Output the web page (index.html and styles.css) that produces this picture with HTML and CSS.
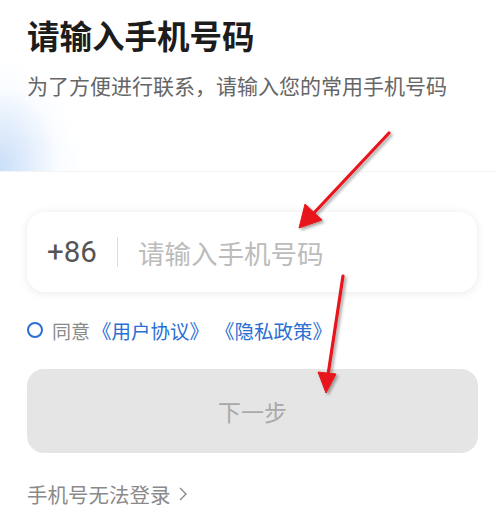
FILE: index.html
```html
<!DOCTYPE html>
<html lang="zh-CN">
<head>
<meta charset="utf-8">
<link rel="stylesheet" href="styles.css">
</head>
<body>
<div class="page">
  <header class="hero">
    <h1 class="title">请输入手机号码</h1>
    <p class="subtitle">为了方便进行联系，请输入您的常用手机号码</p>
  </header>
  <main class="form">
    <div class="phone-card">
      <span class="code">+86</span>
      <span class="divider"></span>
      <span class="placeholder">请输入手机号码</span>
    </div>
    <div class="agree">
      <span class="radio"></span>
      <span class="agree-text">同意</span>
      <span class="link">《用户协议》</span>
      <span class="link link-2">《隐私政策》</span>
    </div>
    <div class="next-btn">下一步</div>
    <div class="help">手机号无法登录<svg class="chev" width="10" height="16" viewBox="0 0 10 16"><path d="M2 2 L8 8 L2 14" fill="none" stroke="#8a8a8a" stroke-width="1.4"/></svg></div>
  </main>
  <svg class="arrows" width="496" height="517" viewBox="0 0 496 517">
    <defs>
      <filter id="sh" x="-20%" y="-20%" width="140%" height="140%">
        <feDropShadow dx="2" dy="2" stdDeviation="1.5" flood-color="#000" flood-opacity="0.35"/>
      </filter>
    </defs>
    <g filter="url(#sh)" fill="#e8141a" stroke="#e8141a">
      <line x1="389" y1="133" x2="312" y2="215" stroke-width="3.2" stroke-linecap="round"/>
      <polygon points="299,228 305,204 322,220" stroke-width="1"/>
      <line x1="343" y1="276" x2="328" y2="375" stroke-width="3.2" stroke-linecap="round"/>
      <polygon points="326,393 318,372 336,374" stroke-width="1"/>
    </g>
  </svg>
</div>
</body>
</html>
```
FILE: styles.css
```css
* { box-sizing: border-box; }
html, body { margin: 0; padding: 0; }
body {
  width: 496px;
  height: 517px;
  overflow: hidden;
  background: #ffffff;
  font-family: "Noto Sans CJK SC", "Noto Sans", sans-serif;
}
.page { position: relative; width: 496px; height: 517px; }
.hero {
  height: 172px;
  padding: 12px 27px 0;
  border-bottom: 1px solid #f4f4f4;
  background:
    radial-gradient(ellipse 80px 105px at 0px 165px, rgba(200,221,249,0.95) 0%, rgba(216,231,251,0.7) 40%, rgba(238,245,255,0.35) 72%, rgba(255,255,255,0) 100%),
    #ffffff;
}
.title {
  margin: 0;
  font-size: 32.5px;
  line-height: 46px;
  font-weight: 700;
  color: #1c1c1c;
}
.subtitle {
  margin: 12px 0 0;
  font-size: 21px;
  line-height: 30px;
  color: #666666;
}
.form { padding: 40px 18px 0 27px; }
.phone-card {
  height: 80px;
  margin-right: 1px;
  border-radius: 18px;
  background: #ffffff;
  box-shadow: 0 1px 10px rgba(0,0,0,0.09);
  display: flex;
  align-items: center;
  padding-left: 20px;
}
.code {
  font-family: "Roboto", "Noto Sans", sans-serif;
  font-size: 29.5px;
  color: #555555;
}
.divider {
  width: 1px;
  height: 30px;
  background: #dddddd;
  margin: 0 20px 0 20px;
}
.placeholder {
  font-size: 26.5px;
  color: #bcbcbc;
}
.agree {
  display: flex;
  align-items: center;
  margin-top: 25px;
  height: 26px;
}
.radio {
  width: 16px;
  height: 16px;
  border: 2px solid #2a6fd4;
  border-radius: 50%;
  margin-right: 9px;
}
.agree-text { font-size: 19px; color: #8a8a8a; margin-right: 2px; }
.link { font-size: 19.5px; color: #2a6fd4; }
.link-2 { margin-left: 6px; }
.next-btn {
  margin-top: 26px;
  height: 84px;
  border-radius: 17px;
  background: #e5e5e5;
  color: #a9a9a9;
  font-size: 23px;
  display: flex;
  align-items: center;
  justify-content: center;
}
.help {
  margin-top: 26px;
  font-size: 20.5px;
  color: #8a8a8a;
  display: flex;
  align-items: center;
}
.chev { margin-left: 7px; }
.arrows { position: absolute; left: 0; top: 0; pointer-events: none; }
```
